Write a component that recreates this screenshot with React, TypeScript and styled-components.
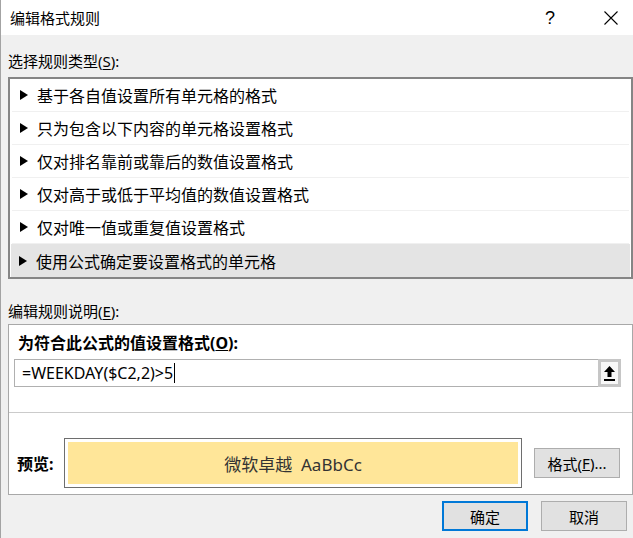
import React from 'react'
import styled, { createGlobalStyle } from 'styled-components'

const GlobalStyle = createGlobalStyle`
  html, body {
    margin: 0;
    padding: 0;
    background: #f0f0f0;
  }
  body {
    font-family: "Noto Sans", "Noto Sans CJK SC", sans-serif;
    color: #000;
  }
`

const ruleTypes = [
  '基于各自值设置所有单元格的格式',
  '只为包含以下内容的单元格设置格式',
  '仅对排名靠前或靠后的数值设置格式',
  '仅对高于或低于平均值的数值设置格式',
  '仅对唯一值或重复值设置格式',
  '使用公式确定要设置格式的单元格',
]

const App: React.FC = () => {
  const selected = 5

  return (
    <>
      <GlobalStyle />
      <Window>
        <TitleBar>
          <Title>编辑格式规则</Title>
          <HelpGlyph>?</HelpGlyph>
          <CloseGlyph>
            <svg width="14" height="14" viewBox="0 0 14 14">
              <path d="M0.5 0.5 L13.5 13.5 M13.5 0.5 L0.5 13.5" stroke="#000" strokeWidth="1.1" fill="none" />
            </svg>
          </CloseGlyph>
        </TitleBar>

        <Body>
          <SectionLabel $top={13}>
            选择规则类型(<u>S</u>):
          </SectionLabel>
          <RuleList>
            {ruleTypes.map((text, i) => (
              <RuleRow key={text} $selected={i === selected} $last={i === ruleTypes.length - 1}>
                <Arrow />
                {text}
              </RuleRow>
            ))}
          </RuleList>

          <SectionLabel $top={19}>
            编辑规则说明(<u>E</u>):
          </SectionLabel>
          <DescPanel>
            <BoldLabel>
              为符合此公式的值设置格式(<u>O</u>):
            </BoldLabel>
            <FormulaField>
              <FormulaText>
                =WEEKDAY($C2,2)&gt;5
                <Caret />
              </FormulaText>
              <PickButton>
                <svg width="11" height="15" viewBox="0 0 11 15">
                  <path d="M5.5 0 L11 6 L7.5 6 L7.5 11 L3.5 11 L3.5 6 L0 6 Z" fill="#000" />
                  <rect x="0" y="13" width="11" height="2" fill="#000" />
                </svg>
              </PickButton>
            </FormulaField>
            <Divider />
            <PreviewRow>
              <PreviewLabel>预览:</PreviewLabel>
              <PreviewBox>
                <PreviewSwatch>微软卓越&nbsp;&nbsp;AaBbCc</PreviewSwatch>
              </PreviewBox>
              <DialogButton $width={86}>
                格式(<u>F</u>)...
              </DialogButton>
            </PreviewRow>
          </DescPanel>

          <Footer>
            <DialogButton $width={86} $default>
              确定
            </DialogButton>
            <DialogButton $width={86}>取消</DialogButton>
          </Footer>
        </Body>
      </Window>
    </>
  )
}

const Window = styled.div`
  width: 633px;
  height: 538px;
  box-sizing: border-box;
  border-left: 1px solid #a3a3a3;
  background: #f0f0f0;
  display: flex;
  flex-direction: column;
  overflow: hidden;
`

const TitleBar = styled.div`
  height: 35px;
  flex: none;
  background: #fff;
  display: flex;
  align-items: center;
  padding-left: 9px;
  padding-right: 12px;
`

const Title = styled.div`
  flex: 1;
  font-size: 15px;
  line-height: 20px;
`

const HelpGlyph = styled.div`
  width: 20px;
  text-align: center;
  font-size: 18px;
  font-weight: 300;
  font-family: "Liberation Sans", sans-serif;
  line-height: 20px;
  margin-right: 41px;
`

const CloseGlyph = styled.div`
  width: 20px;
  height: 20px;
  display: flex;
  align-items: center;
  justify-content: center;
`

const Body = styled.div`
  flex: 1;
  display: flex;
  flex-direction: column;
  padding-left: 7px;
`

const SectionLabel = styled.div<{ $top: number }>`
  padding-top: ${p => p.$top}px;
  line-height: 26px;
  font-size: 15px;

  u {
    text-underline-offset: 2px;
  }
`

const RuleList = styled.div`
  margin-top: 3px;
  border: 2px solid #858585;
  background: #fff;
  height: 202px;
  box-sizing: border-box;
  padding: 0 1px;
`

const RuleRow = styled.div<{ $selected: boolean; $last: boolean }>`
  height: 33px;
  box-sizing: border-box;
  display: flex;
  align-items: center;
  padding-left: 8px;
  font-size: 16px;
  background: ${p => (p.$selected ? '#e4e4e4' : '#fff')};
  border-bottom: ${p => (p.$last ? 'none' : '1px solid #f0f0f0')};
  margin: 0 ${p => (p.$selected ? 0 : 1)}px;
`

const Arrow = styled.span`
  width: 0;
  height: 0;
  border-left: 8px solid #000;
  border-top: 5px solid transparent;
  border-bottom: 5px solid transparent;
  margin-right: 9px;
`

const DescPanel = styled.div`
  background: #fff;
  border: 1px solid #a8a8a8;
  height: 171px;
  box-sizing: border-box;
  display: flex;
  flex-direction: column;
`

const BoldLabel = styled.div`
  font-size: 16px;
  font-weight: 700;
  line-height: 24px;
  padding: 6px 0 0 9px;
`

const FormulaField = styled.div`
  margin: 4px 11px 0 5px;
  height: 28px;
  box-sizing: border-box;
  border: 1px solid #b0b0b0;
  display: flex;
  align-items: stretch;
`

const FormulaText = styled.div`
  flex: 1;
  display: flex;
  align-items: center;
  padding-left: 7px;
  font-size: 16px;
  font-family: "Noto Sans", sans-serif;
`

const Caret = styled.span`
  width: 1px;
  height: 20px;
  background: #000;
  margin-left: 1px;
`

const PickButton = styled.div`
  width: 23px;
  margin: -1px -1px -1px 0;
  box-sizing: border-box;
  border: 3px solid #c6c6c6;
  background: #f7f7f7;
  display: flex;
  align-items: center;
  justify-content: center;
`

const Divider = styled.div`
  margin-top: 25px;
  height: 1px;
  background: #cbcbcb;
`

const PreviewRow = styled.div`
  display: flex;
  align-items: center;
  padding-top: 25px;
`

const PreviewLabel = styled.div`
  width: 47px;
  padding-left: 8px;
  font-size: 16px;
  font-weight: 700;
`

const PreviewBox = styled.div`
  width: 458px;
  height: 50px;
  box-sizing: border-box;
  border: 1px solid #6e6e6e;
  padding: 3px;
  background: #fff;
`

const PreviewSwatch = styled.div`
  height: 100%;
  background: #ffe699;
  display: flex;
  align-items: center;
  justify-content: center;
  font-size: 17px;
  color: #333;
`

const DialogButton = styled.div<{ $width: number; $default?: boolean }>`
  width: ${p => p.$width}px;
  height: 30px;
  box-sizing: border-box;
  margin-left: 12px;
  background: #e1e1e1;
  border: ${p => (p.$default ? '2px solid #0078d7' : '1px solid #adadad')};
  display: flex;
  align-items: center;
  justify-content: center;
  font-size: 15px;
  flex: none;
`

const Footer = styled.div`
  display: flex;
  justify-content: flex-end;
  padding: 6px 6px 0 0;

  & > * + * {
    margin-left: 13px;
  }
  & > :first-child {
    margin-left: 0;
  }
`

export default App
